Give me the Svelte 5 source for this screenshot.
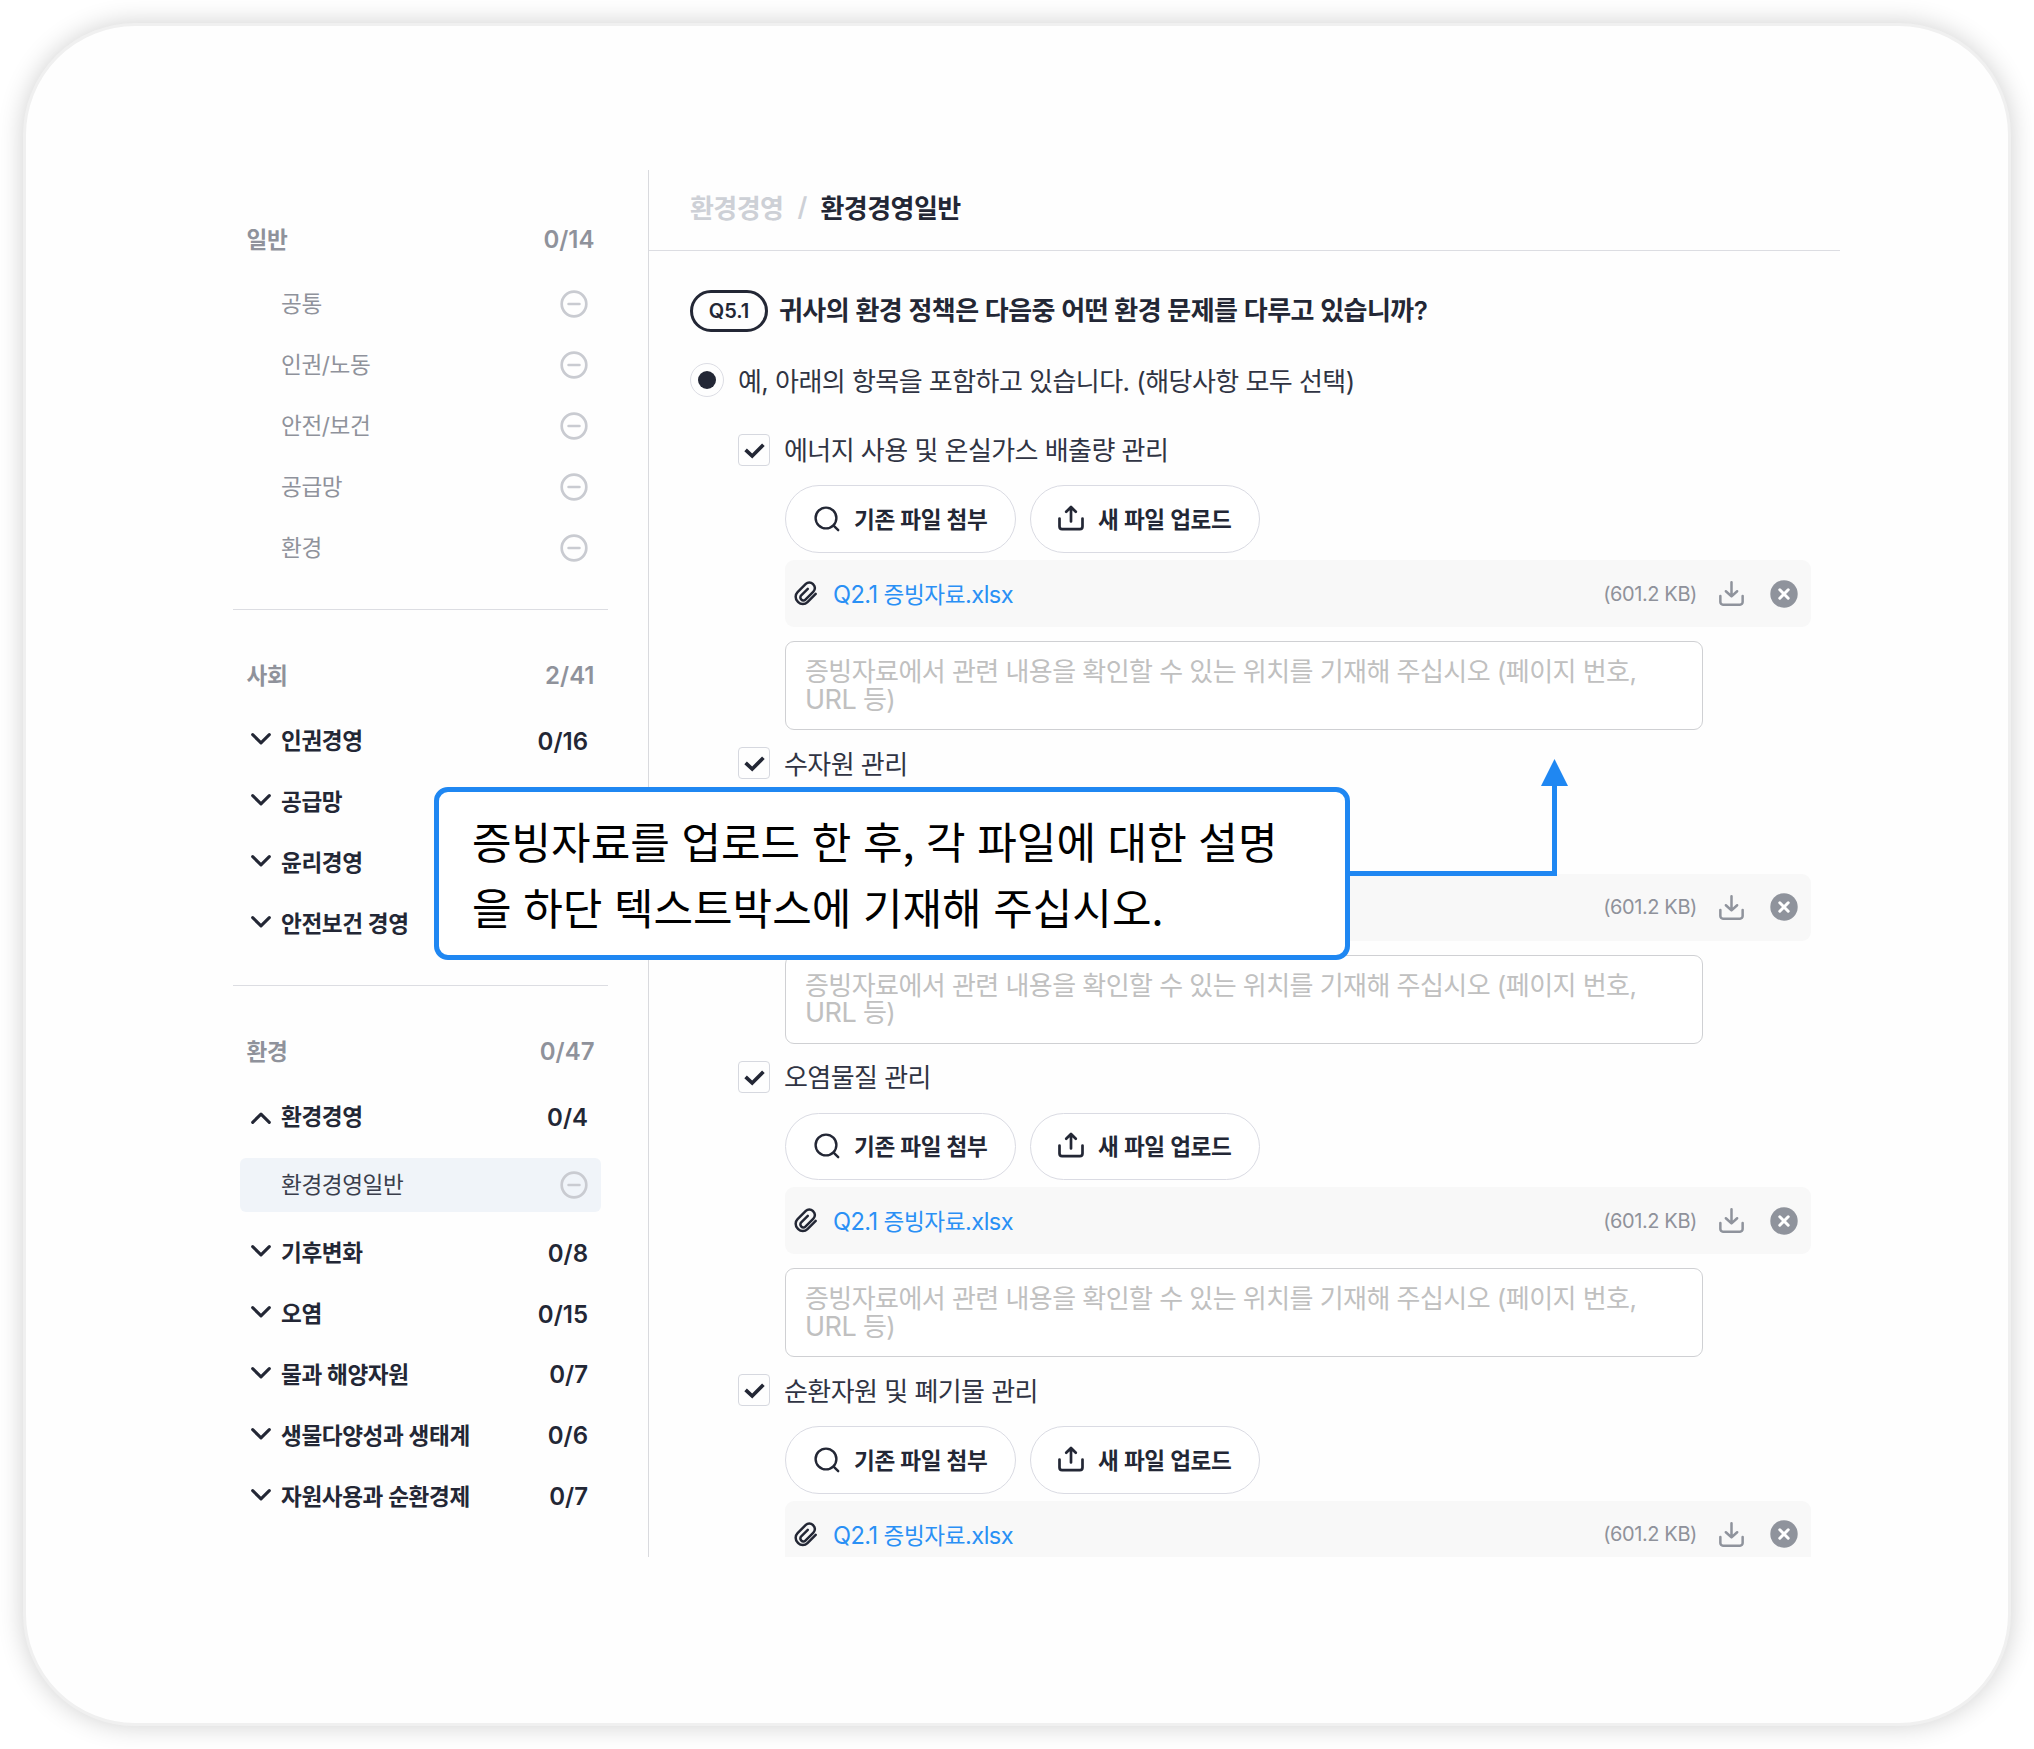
<script>
  const sections = [
    {
      title: '일반',
      count: '0/14',
      rows: [
        { label: '공통', kind: 'leaf' },
        { label: '인권/노동', kind: 'leaf' },
        { label: '안전/보건', kind: 'leaf' },
        { label: '공급망', kind: 'leaf' },
        { label: '환경', kind: 'leaf' }
      ]
    },
    {
      title: '사회',
      count: '2/41',
      rows: [
        { label: '인권경영', kind: 'group', count: '0/16' },
        { label: '공급망', kind: 'group', count: '' },
        { label: '윤리경영', kind: 'group', count: '' },
        { label: '안전보건 경영', kind: 'group', count: '' }
      ]
    },
    {
      title: '환경',
      count: '0/47',
      rows: [
        { label: '환경경영', kind: 'group', count: '0/4', open: true },
        { label: '환경경영일반', kind: 'active' },
        { label: '기후변화', kind: 'group', count: '0/8' },
        { label: '오염', kind: 'group', count: '0/15' },
        { label: '물과 해양자원', kind: 'group', count: '0/7' },
        { label: '생물다양성과 생태계', kind: 'group', count: '0/6' },
        { label: '자원사용과 순환경제', kind: 'group', count: '0/7' }
      ]
    }
  ];

  const items = [
    '에너지 사용 및 온실가스 배출량 관리',
    '수자원 관리',
    '오염물질 관리',
    '순환자원 및 폐기물 관리'
  ];
</script>

{#snippet minus()}
  <svg class="minus" viewBox="0 0 28 28" fill="none" stroke="currentColor" stroke-width="2.7" stroke-linecap="round">
    <circle cx="14" cy="14" r="12.3" />
    <path d="M8.6 14h10.8" />
  </svg>
{/snippet}

<div class="page">
  <div class="card">
    <div class="app">
      <aside class="sidebar">
        {#each sections as section}
          <section class="section">
            <header class="section-head">
              <span class="title">{section.title}</span>
              <span class="num">{section.count}</span>
            </header>
            {#each section.rows as row}
              <div class="row {row.kind}">
                <div class="row-inner">
                  <span class="chev">
                    {#if row.kind === 'group'}
                      <svg class:open={row.open} viewBox="0 0 20 12" fill="none" stroke="currentColor" stroke-width="3.1" stroke-linecap="round" stroke-linejoin="round">
                        <path d="M1.7 1.7 10 9.8l8.3-8.1" />
                      </svg>
                    {/if}
                  </span>
                  <span class="label">{row.label}</span>
                  {#if row.kind === 'group'}
                    <span class="num">{row.count}</span>
                  {:else}
                    {@render minus()}
                  {/if}
                </div>
              </div>
            {/each}
          </section>
        {/each}
      </aside>

      <main class="main">
        <nav class="crumbs">
          <span class="crumb">환경경영</span>
          <span class="slash">/</span>
          <span class="crumb current">환경경영일반</span>
        </nav>

        <div class="question">
          <span class="badge">Q5.1</span>
          <h1>귀사의 환경 정책은 다음중 어떤 환경 문제를 다루고 있습니까?</h1>
        </div>

        <div class="answer">
          <span class="radio"></span>
          <span class="body-text">예, 아래의 항목을 포함하고 있습니다. (해당사항 모두 선택)</span>
        </div>

        <div class="items">
          {#each items as item}
            <div class="item">
              <div class="check-row">
                <span class="checkbox">
                  <svg viewBox="0 0 32 32" fill="none" stroke="currentColor" stroke-width="3.7">
                    <path d="M7.6 15.8 14.2 22 25.4 10.8" />
                  </svg>
                </span>
                <span class="body-text">{item}</span>
              </div>
              <div class="detail">
                <div class="buttons">
                  <button type="button" class="pill">
                    <svg viewBox="0 0 26 26" fill="none" stroke="currentColor" stroke-width="2.4" stroke-linecap="round">
                      <circle cx="12" cy="12" r="10.4" />
                      <path d="M19.6 19.6l4.6 4.6" />
                    </svg>
                    <span>기존 파일 첨부</span>
                  </button>
                  <button type="button" class="pill second">
                    <svg viewBox="0 0 26 26" fill="none" stroke="currentColor" stroke-width="2.7" stroke-linecap="round" stroke-linejoin="round">
                      <path d="M1.5 13.5v8.1a2.6 2.6 0 0 0 2.6 2.6h17.8a2.6 2.6 0 0 0 2.6-2.6v-8.1" />
                      <path d="M13 16.5V2.2M8.2 6.8 13 2l4.8 4.8" />
                    </svg>
                    <span>새 파일 업로드</span>
                  </button>
                </div>
                <div class="file">
                  <svg class="clip" viewBox="0 0 24 24" fill="none" stroke="currentColor" stroke-width="2.4" stroke-linecap="round" stroke-linejoin="round">
                    <path d="M21.8 12.3l-7.9 7.9a6.3 6.3 0 0 1-8.9 0l-.6-.6a6.3 6.3 0 0 1 0-8.9l7.9-7.9a4.7 4.7 0 0 1 6.7 0l.6.6a4.7 4.7 0 0 1 0 6.7l-7.7 7.7a2.7 2.7 0 0 1-3.9 0l-.1-.1a2.7 2.7 0 0 1 0-3.9l6.3-6.3" />
                  </svg>
                  <a class="name" href="#file"><span class="lat">Q2.1</span> 증빙자료<span class="lat">.xlsx</span></a>
                  <span class="size">(601.2 KB)</span>
                  <svg class="download" viewBox="0 0 24 24" fill="none" stroke="currentColor" stroke-width="2.4" stroke-linecap="round" stroke-linejoin="round">
                    <path d="M1.3 14.5v5.7a2.5 2.5 0 0 0 2.5 2.5h16.4a2.5 2.5 0 0 0 2.5-2.5v-5.7" />
                    <path d="M12 1.2v13.4M6.6 9.8l5.4 5 5.4-5" />
                  </svg>
                  <svg class="remove" viewBox="0 0 28 28">
                    <circle cx="14" cy="14" r="13.7" fill="currentColor" />
                    <path d="M9.8 9.8l8.4 8.4M18.2 9.8l-8.4 8.4" stroke="#fff" stroke-width="3" stroke-linecap="round" />
                  </svg>
                </div>
                <div class="note">증빙자료에서 관련 내용을 확인할 수 있는 위치를 기재해 주십시오 (페이지 번호,<br /><span class="url">URL</span> 등)</div>
              </div>
            </div>
          {/each}
        </div>
      </main>
    </div>
  </div>

  <svg class="arrow" viewBox="0 0 220 120" aria-hidden="true">
    <path d="M0 114.5H206.5V26" fill="none" stroke="#1f87f2" stroke-width="5" />
    <path d="M206.5 0l13.5 27h-27z" fill="#1f87f2" />
  </svg>
  <div class="callout">증빙자료를 업로드 한 후, 각 파일에 대한 설명<br />을 하단 텍스트박스에 기재해 주십시오.</div>
</div>

<style>
  :global(body) {
    margin: 0;
    background: #fff;
  }

  .page {
    position: relative;
    box-sizing: border-box;
    width: 2034px;
    height: 1749px;
    padding: 23px;
    overflow: hidden;
    font-family: Inter, 'Noto Sans CJK KR', sans-serif;
    color: #232735;
  }

  .card {
    box-sizing: border-box;
    width: 1988px;
    height: 1703px;
    padding: 144px 168px 0 207px;
    border: 3px solid #f0f0f0;
    border-radius: 112px;
    background: #fefefe;
    box-shadow: 0 0 26px rgba(0, 0, 0, 0.19);
  }

  .app {
    display: flex;
    height: 1387px;
    overflow: hidden;
  }

  .sidebar {
    flex: none;
    box-sizing: border-box;
    width: 416px;
    padding: 34px 40px 0 0;
    border-right: 1px solid #d9dade;
    font-size: 22.6px;
    letter-spacing: -0.4px;
    color: #8f929b;
  }

  .section {
    padding-bottom: 30.4px;
  }

  .section + .section {
    padding-top: 31px;
    border-top: 1px solid #dcdde2;
  }

  .section-head {
    display: flex;
    align-items: center;
    justify-content: space-between;
    height: 70px;
    padding: 0 13.5px;
    font-weight: 600;
  }

  .title {
    padding-bottom: 2px;
  }

  .label {
    flex: 1;
    padding-bottom: 3.4px;
  }

  .num {
    font-size: 24px;
    letter-spacing: 0;
  }

  .row {
    display: flex;
    align-items: center;
    height: 60.9px;
    padding: 0 7px;
  }

  .row-inner {
    display: flex;
    align-items: center;
    flex: 1;
    padding: 0 13px 0 11px;
  }

  .row.group {
    font-weight: 600;
    color: #232735;
  }

  .row.active {
    height: 75px;
    color: #3a3e4c;
  }

  .row.active .row-inner {
    height: 54px;
    border-radius: 6px;
    background: #f0f4f9;
  }

  .chev {
    display: flex;
    flex: none;
    width: 30px;
  }

  .chev svg {
    width: 20px;
    height: 12px;
    margin-top: -4px;
  }

  .chev svg.open {
    margin-top: 2px;
    transform: scaleY(-1);
  }

  .minus {
    width: 28px;
    height: 28px;
    margin-right: 0.3px;
    color: #c9cbd1;
  }

  .main {
    flex: 1;
    min-width: 0;
  }

  .crumbs {
    display: flex;
    align-items: center;
    box-sizing: border-box;
    height: 81px;
    padding: 0 0 6.5px 41px;
    border-bottom: 1px solid #dcdde2;
    font-size: 26px;
    font-weight: 600;
    letter-spacing: -0.55px;
    color: #cdd0d6;
  }

  .slash {
    margin: 0 13.7px 0 14px;
  }

  .current {
    color: #232735;
  }

  .question {
    display: flex;
    align-items: center;
    gap: 11px;
    height: 42px;
    padding: 39px 0 0 41px;
  }

  .badge {
    display: flex;
    align-items: center;
    justify-content: center;
    box-sizing: border-box;
    width: 78px;
    height: 42px;
    border: 3px solid #232735;
    border-radius: 21px;
    font-size: 20px;
    font-weight: 600;
  }

  h1 {
    margin: 0;
    padding-bottom: 5px;
    font-size: 26px;
    font-weight: 600;
    letter-spacing: -0.55px;
    word-spacing: 0.3px;
    white-space: nowrap;
  }

  .answer {
    display: flex;
    align-items: center;
    gap: 14px;
    height: 34px;
    padding: 31px 0 0 41px;
  }

  .radio {
    display: flex;
    align-items: center;
    justify-content: center;
    box-sizing: border-box;
    width: 34px;
    height: 34px;
    border: 1px solid #dcdde4;
    border-radius: 50%;
  }

  .radio::after {
    content: '';
    width: 18px;
    height: 18px;
    border-radius: 50%;
    background: #232735;
  }

  .body-text {
    padding-bottom: 2px;
    font-size: 26px;
    letter-spacing: -0.55px;
    white-space: nowrap;
    color: #303443;
  }

  .items {
    padding: 36.5px 0 0 89px;
  }

  .item {
    height: 313.6px;
  }

  .check-row {
    display: flex;
    align-items: center;
    gap: 14px;
    height: 32.4px;
  }

  .checkbox {
    box-sizing: border-box;
    width: 32px;
    height: 32px;
    border: 1px solid #d6d8df;
    border-radius: 4px;
  }

  .checkbox svg {
    display: block;
    width: 32px;
    height: 32px;
    margin: -1px;
  }

  .detail {
    padding: 19.6px 0 0 47px;
  }

  .buttons {
    display: flex;
    gap: 14px;
  }

  .pill {
    display: flex;
    align-items: center;
    gap: 14px;
    box-sizing: border-box;
    width: 231px;
    height: 67.5px;
    padding: 0 0 0 28px;
    border: 1px solid #dadbe3;
    border-radius: 34px;
    background: #fff;
    font: 600 22.6px Inter, 'Noto Sans CJK KR', sans-serif;
    letter-spacing: -0.4px;
    word-spacing: 0.2px;
    white-space: nowrap;
    color: #232735;
  }

  .pill span {
    padding-bottom: 2px;
  }

  .pill svg {
    flex: none;
    width: 26px;
    height: 26px;
  }

  .pill.second {
    width: 230px;
    padding-left: 27px;
  }

  .pill.second svg {
    margin-top: -3px;
  }

  .file {
    display: flex;
    align-items: center;
    box-sizing: border-box;
    width: 1026px;
    height: 67.3px;
    margin-top: 7px;
    padding: 0 13px 0 8px;
    border-radius: 9px;
    background: #f8f8f8;
  }

  .clip {
    width: 25px;
    height: 25px;
  }

  .name {
    flex: 1;
    margin-left: 15px;
    padding-bottom: 0.6px;
    font-size: 22.6px;
    letter-spacing: -0.4px;
    text-decoration: none;
    color: #2a90f5;
  }

  .lat {
    font-size: 23.6px;
    letter-spacing: -0.55px;
  }

  .size {
    font-size: 20px;
    letter-spacing: -0.4px;
    color: #8f929b;
  }

  .download {
    width: 25px;
    height: 25px;
    margin-left: 22px;
    color: #8f939c;
  }

  .remove {
    width: 28px;
    height: 28px;
    margin-left: 26px;
    color: #8f939c;
  }

  .note {
    box-sizing: border-box;
    width: 918px;
    height: 88.7px;
    margin-top: 14px;
    padding: 16px 19px;
    border: 1px solid #cfd0d3;
    border-radius: 9px;
    background: #fff;
    font-size: 26px;
    line-height: 27.5px;
    letter-spacing: -0.55px;
    white-space: nowrap;
    color: #c0c0c0;
  }

  .url {
    font-size: 27px;
    letter-spacing: -0.5px;
  }

  .arrow {
    position: absolute;
    left: 1348px;
    top: 759px;
    width: 220px;
    height: 120px;
  }

  .callout {
    position: absolute;
    left: 434px;
    top: 787px;
    box-sizing: border-box;
    width: 916px;
    height: 173px;
    padding: 15px 33px;
    border: 5px solid #1f87f2;
    border-radius: 14px;
    background: #fff;
    font-family: 'Noto Sans CJK KR', sans-serif;
    font-size: 43px;
    line-height: 66px;
    word-spacing: 2px;
    white-space: nowrap;
    color: #000;
  }
</style>
